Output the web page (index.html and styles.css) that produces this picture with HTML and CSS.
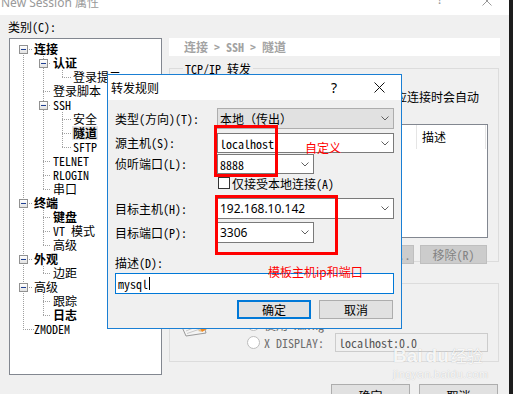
FILE: index.html
```html
<!DOCTYPE html>
<html lang="zh-CN">
<head>
    <meta charset="UTF-8">
    <title>New Session 属性</title>
    <link rel="stylesheet" href="styles.css">
</head>
<body>
    <div class="window">
        <div class="titlebar">
            <span class="win-title">New Session 属性</span>
            <span class="win-help">?</span>
            <svg class="win-close" width="10" height="10" viewBox="0 0 10 10"><path d="M0.5 0.5 L9.5 9.5 M9.5 0.5 L0.5 9.5" stroke="#999" stroke-width="1"/></svg>
        </div>

        <div class="client">
            <div class="side">
                <div class="side-label">类别(C):</div>
                <div class="tree">
                    <svg class="tree-lines" width="151" height="335" viewBox="0 0 151 335">
                        <path d="M13.5 10 V291 M13 10.5 H22 M13 164.5 H22 M13 220.5 H22 M13 248.5 H22 M13 290.5 H24
                                 M33.5 17 V151 M33 24.5 H41 M33 52.5 H41 M33 66.5 H41 M33 122.5 H41 M33 136.5 H41 M33 150.5 H41
                                 M52.5 31 V39 M52 38.5 H61
                                 M52.5 73 V109 M52 80.5 H61 M52 94.5 H61 M52 108.5 H61
                                 M33.5 171 V207 M33 178.5 H41 M33 192.5 H41 M33 206.5 H41
                                 M33.5 227 V235 M33 234.5 H41
                                 M33.5 255 V277 M33 262.5 H41 M33 276.5 H41"
                              stroke="#a0a0a0" stroke-width="1" stroke-dasharray="1 1" fill="none"/>
                    </svg>
                    <div class="node l0"><span class="exp"></span><b>连接</b></div>
                    <div class="node l1"><span class="exp"></span><b>认证</b></div>
                    <div class="node l2">登录提示</div>
                    <div class="node l1">登录脚本</div>
                    <div class="node l1"><span class="exp"></span>SSH</div>
                    <div class="node l2">安全</div>
                    <div class="node l2"><b class="selected">隧道</b></div>
                    <div class="node l2">SFTP</div>
                    <div class="node l1">TELNET</div>
                    <div class="node l1">RLOGIN</div>
                    <div class="node l1">串口</div>
                    <div class="node l0"><span class="exp"></span><b>终端</b></div>
                    <div class="node l1"><b>键盘</b></div>
                    <div class="node l1">VT 模式</div>
                    <div class="node l1">高级</div>
                    <div class="node l0"><span class="exp"></span><b>外观</b></div>
                    <div class="node l1">边距</div>
                    <div class="node l0"><span class="exp"></span>高级</div>
                    <div class="node l1">跟踪</div>
                    <div class="node l1"><b>日志</b></div>
                    <div class="node l0">ZMODEM</div>
                </div>
            </div>

            <div class="main">
                <div class="crumb">连接 &gt; SSH &gt; 隧道</div>

                <div class="group g1">
                    <div class="legend">TCP/IP 转发</div>
                    <p class="intro">当会话建立时，此处列出的端口转发规则应连接时会自动</p>
                    <div class="list">
                        <div class="list-head">
                            <span class="col col-name">名称</span>
                            <span class="col col-desc">描述</span>
                        </div>
                    </div>
                    <div class="list-btns">
                        <span class="btn off">添加(A)...</span>
                        <span class="btn off">编辑(E)...</span>
                        <span class="btn off">移除(R)</span>
                    </div>
                </div>

                <div class="group g2">
                    <svg class="x11-icon" width="32" height="32" viewBox="0 0 32 32">
                        <path d="M2 22 L22 14 L26 28 L6 31 Z" fill="#f4f4f4" stroke="#9a9a9a"/>
                        <path d="M6 26 L18 21 M7 28.5 L20 24" stroke="#c8c8c8"/>
                        <path d="M20 24 L30 18 L32 21 L22 27 Z" fill="#f08a24"/>
                        <path d="M18 26 L20 24 L22 27 Z" fill="#e0c090"/>
                    </svg>
                    <div class="x11-opts">
                        <div class="opt"><span class="radio"></span>使用 Xming</div>
                        <div class="opt"><span class="radio"></span><span class="opt-name">X DISPLAY:</span><span class="disp">localhost:0.0</span></div>
                    </div>
                </div>

                <div class="main-btns">
                    <span class="btn">确定</span>
                    <span class="btn">取消</span>
                </div>
            </div>
        </div>

        <div class="watermark">
            <div class="wm-logo">Bai<span class="wm-du">du</span><span class="wm-cn">经验</span></div>
            <div class="wm-url">jingyan.baidu.com</div>
        </div>

        <div class="dialog">
            <div class="dlg-title">
                <span class="dlg-name">转发规则</span>
                <span class="dlg-help">?</span>
                <svg class="dlg-close" width="11" height="11" viewBox="0 0 11 11"><path d="M0.5 0.5 L10.5 10.5 M10.5 0.5 L0.5 10.5" stroke="#111" stroke-width="1"/></svg>
            </div>
            <div class="dlg-body">
                <div class="frow r-type">
                    <span class="flabel">类型(方向)(T):</span>
                    <div class="combo wide ro"><span>本地（传出）</span><svg class="chev" width="8" height="5" viewBox="0 0 8 5"><path d="M0.5 0.5 L4 4 L7.5 0.5" stroke="#606060" fill="none"/></svg></div>
                </div>
                <div class="frow r-src">
                    <span class="flabel">源主机(S):</span>
                    <div class="combo wide"><span>localhost</span><svg class="chev" width="8" height="5" viewBox="0 0 8 5"><path d="M0.5 0.5 L4 4 L7.5 0.5" stroke="#606060" fill="none"/></svg></div>
                </div>
                <div class="frow r-port">
                    <span class="flabel">侦听端口(L):</span>
                    <div class="combo narrow"><span>8888</span><svg class="chev" width="8" height="5" viewBox="0 0 8 5"><path d="M0.5 0.5 L4 4 L7.5 0.5" stroke="#606060" fill="none"/></svg></div>
                </div>
                <div class="check-row"><span class="check"></span>仅接受本地连接(A)</div>
                <div class="frow r-dhost">
                    <span class="flabel">目标主机(H):</span>
                    <div class="combo wide"><span class="num">192.168.10.142</span><svg class="chev" width="8" height="5" viewBox="0 0 8 5"><path d="M0.5 0.5 L4 4 L7.5 0.5" stroke="#606060" fill="none"/></svg></div>
                </div>
                <div class="frow r-dport">
                    <span class="flabel">目标端口(P):</span>
                    <div class="combo narrow"><span class="num">3306</span><svg class="chev" width="8" height="5" viewBox="0 0 8 5"><path d="M0.5 0.5 L4 4 L7.5 0.5" stroke="#606060" fill="none"/></svg></div>
                </div>
                <div class="desc-label">描述(D):</div>
                <div class="desc-input">mysql<span class="caret"></span></div>
                <div class="dlg-btns">
                    <span class="btn default">确定</span>
                    <span class="btn">取消</span>
                </div>
            </div>
        </div>

        <div class="mark mark-src"></div>
        <div class="mark mark-dst"></div>
        <div class="note note-src">自定义</div>
        <div class="note note-dst">模板主机ip和端口</div>
    </div>
</body>
</html>
```

FILE: styles.css
```css
* {
    box-sizing: border-box;
}

body {
    margin: 0;
    background-color: #1c1c1c;
    font-family: "Noto Sans Mono CJK SC", "Noto Sans CJK SC", monospace;
    font-size: 12px;
    color: #000000;
}

b {
    font-weight: 700;
}

.window {
    position: relative;
    width: 509px;
    height: 394px;
    background-color: #f0f0f0;
    overflow: hidden;
}

/* outer window title bar, mostly scrolled off the top */
.titlebar {
    display: flex;
    align-items: flex-start;
    height: 15px;
    background-color: #ffffff;
    color: #999999;
    font-family: "Noto Sans", "Noto Sans CJK SC", sans-serif;
}

.win-title {
    margin: -3px 0 0 1px;
    line-height: 12px;
    font-size: 12px;
}

.win-help {
    margin: -7px 0 0 auto;
    font-size: 13px;
    line-height: 12px;
}

.win-close {
    margin: -4px 17px 0 39px;
}

.client {
    display: flex;
    padding-top: 4px;
}

/* category tree */
.side {
    width: 162px;
    padding-left: 9px;
}

.side-label {
    height: 16px;
    line-height: 16px;
    margin-left: -1px;
}

.tree {
    position: relative;
    width: 153px;
    height: 337px;
    margin-top: 3px;
    padding-top: 3px;
    background-color: #ffffff;
    border: 1px solid #828790;
}

.tree-lines {
    position: absolute;
    left: 0;
    top: 0;
}

.node {
    position: relative;
    display: flex;
    align-items: center;
    height: 14px;
    line-height: 14px;
    white-space: nowrap;
}

.l0 { padding-left: 24px; }
.l1 { padding-left: 43px; }
.l2 { padding-left: 63px; }

.exp {
    position: relative;
    width: 9px;
    height: 9px;
    border: 1px solid #919191;
    background: linear-gradient(#ffffff, #e2e2e2);
}

.exp::after {
    content: "";
    position: absolute;
    left: 1px;
    top: 3px;
    width: 5px;
    height: 1px;
    background-color: #1f3f91;
}

.l0 .exp { margin: 0 6px 0 -15px; }
.l1 .exp { margin: 0 5px 0 -14px; }

.selected {
    background-color: #e6e6e6;
    padding: 0 1px;
    margin-left: -1px;
}

/* right page */
.main {
    width: 330px;
    margin-left: 7px;
    padding-top: 19px;
}

.crumb {
    width: 331px;
    height: 18px;
    line-height: 18px;
    padding-left: 15px;
    background-color: #ffffff;
    color: #a3a3a3;
    font-weight: 700;
}

.group {
    border: 1px solid #dcdcdc;
}

.g1 {
    height: 194px;
    margin-top: 12px;
    padding: 0 10px 0 9px;
}

.legend {
    display: inline-block;
    margin: -6px 0 0 4px;
    padding: 0 2px;
    height: 12px;
    line-height: 12px;
    background-color: #f0f0f0;
    vertical-align: top;
}

.intro {
    margin: 4px 0 0 0;
    height: 14px;
    line-height: 14px;
    white-space: nowrap;
}

.list {
    height: 114px;
    margin-top: 20px;
    background-color: #ffffff;
    border: 1px solid #828790;
}

.list-head {
    display: flex;
    height: 24px;
}

.col {
    line-height: 24px;
    border-right: 1px solid #e5e5e5;
    padding-left: 5px;
}

.col-name { width: 237px; }
.col-desc { width: 69px; }

.list-btns {
    display: flex;
    justify-content: flex-end;
    gap: 6px;
    margin-top: 7px;
    padding-right: 1px;
}

.btn {
    display: inline-flex;
    align-items: center;
    justify-content: center;
    height: 19px;
    background-color: #e1e1e1;
    border: 1px solid #adadad;
    font-family: "Noto Sans CJK SC", sans-serif;
}

.list-btns .btn {
    width: 67px;
    background-color: #cccccc;
    border-color: #bfbfbf;
    color: #838383;
    font-family: "Noto Sans Mono CJK SC", "Noto Sans CJK SC", monospace;
}

.g2 {
    display: flex;
    height: 79px;
    margin-top: 21px;
}

.x11-icon {
    margin: 21px 0 0 10px;
}

.x11-opts {
    margin: 31px 0 0 35px;
}

.opt {
    display: flex;
    align-items: center;
    height: 18px;
    color: #6d6d6d;
    white-space: nowrap;
}

.opt + .opt {
    margin-top: 0;
}

.radio {
    width: 13px;
    height: 13px;
    margin-right: 4px;
    border: 1px solid #bcbcbc;
    border-radius: 50%;
    background-color: #ffffff;
}

.opt-name {
    width: 71px;
}

.disp {
    width: 153px;
    height: 19px;
    line-height: 17px;
    padding-left: 3px;
    border: 1px solid #cccccc;
    color: #555555;
}

.main-btns {
    display: flex;
    justify-content: flex-end;
    gap: 9px;
    margin-top: 22px;
    padding-right: 1px;
}

.main-btns .btn {
    width: 79px;
    height: 23px;
    align-items: flex-start;
    padding-top: 2px;
}

/* baidu watermark */
.watermark {
    position: absolute;
    left: 393px;
    top: 345px;
    color: rgba(255, 255, 255, 0.9);
    text-shadow: 0 0 1px rgba(0, 0, 0, 0.25);
    font-family: "Liberation Sans", "Noto Sans CJK SC", sans-serif;
}

.wm-logo {
    font-size: 19px;
    font-weight: 700;
    line-height: 22px;
}

.wm-du {
    margin-left: 3px;
}

.wm-cn {
    margin-left: 2px;
    font-size: 16px;
    font-weight: 400;
}

.wm-url {
    font-size: 11px;
    line-height: 12px;
    letter-spacing: 0.4px;
}

/* the 转发规则 dialog */
.dialog {
    position: absolute;
    left: 107px;
    top: 74px;
    width: 295px;
    height: 255px;
    border: 1px solid #1a7fd4;
    background-color: #f0f0f0;
}

.dlg-title {
    display: flex;
    align-items: center;
    height: 25px;
    padding-left: 3px;
    background-color: #ffffff;
    font-family: "Noto Sans CJK SC", sans-serif;
}

.dlg-name {
    line-height: 14px;
}

.dlg-help {
    margin-left: auto;
    font-family: "Noto Sans", sans-serif;
    font-size: 14px;
}

.dlg-close {
    margin: 0 16px 0 37px;
}

.dlg-body {
    padding: 0 7px;
}

.frow {
    display: flex;
    align-items: center;
}

.flabel {
    width: 102px;
    line-height: 12px;
    white-space: nowrap;
}

.combo {
    display: flex;
    align-items: center;
    justify-content: space-between;
    padding: 0 4px 0 2px;
    border: 1px solid #7a7a7a;
    background-color: #ffffff;
    white-space: nowrap;
}

.combo.ro {
    background-color: #e1e1e1;
    border-color: #adadad;
}

.wide { width: 177px; }
.narrow { width: 97px; }

.num {
    font-family: "Noto Sans", sans-serif;
}

.r-type { margin-top: 8px; }
.r-type .combo { height: 21px; }
.r-src { margin-top: 4px; }
.r-src .combo { height: 20px; }
.r-port { margin-top: 1px; }
.r-port .combo { height: 20px; }
.r-dhost { margin-top: 9px; }
.r-dhost .combo { height: 21px; }
.r-dport { margin-top: 3px; }
.r-dport .combo { height: 21px; }

.check-row {
    display: flex;
    align-items: center;
    height: 12px;
    margin: 3px 0 0 103px;
    white-space: nowrap;
}

.check {
    width: 12px;
    height: 12px;
    margin-right: 2px;
    border: 1px solid #333333;
    background-color: #ffffff;
}

.desc-label {
    height: 12px;
    line-height: 12px;
    margin-top: 14px;
}

.desc-input {
    display: flex;
    align-items: center;
    height: 21px;
    margin-top: 4px;
    padding-left: 2px;
    border: 1px solid #0078d7;
    background-color: #ffffff;
}

.caret {
    width: 1px;
    height: 13px;
    margin-left: 1px;
    background-color: #000000;
}

.dlg-btns {
    display: flex;
    justify-content: flex-end;
    gap: 8px;
    margin-top: 6px;
    padding-right: 1px;
}

.dlg-btns .btn {
    width: 74px;
}

.btn.default {
    border: 2px solid #0078d7;
}

/* red annotations drawn over the screenshot */
.mark {
    position: absolute;
    border: 3px solid #ff0000;
}

.mark-src {
    left: 214px;
    top: 125px;
    width: 64px;
    height: 52px;
}

.mark-dst {
    left: 215px;
    top: 195px;
    width: 123px;
    height: 60px;
}

.note {
    position: absolute;
    color: #ff0000;
    font-family: "Noto Sans CJK SC", sans-serif;
    line-height: 14px;
    white-space: nowrap;
}

.note-src {
    left: 305px;
    top: 141px;
}

.note-dst {
    left: 268px;
    top: 265px;
}
```
